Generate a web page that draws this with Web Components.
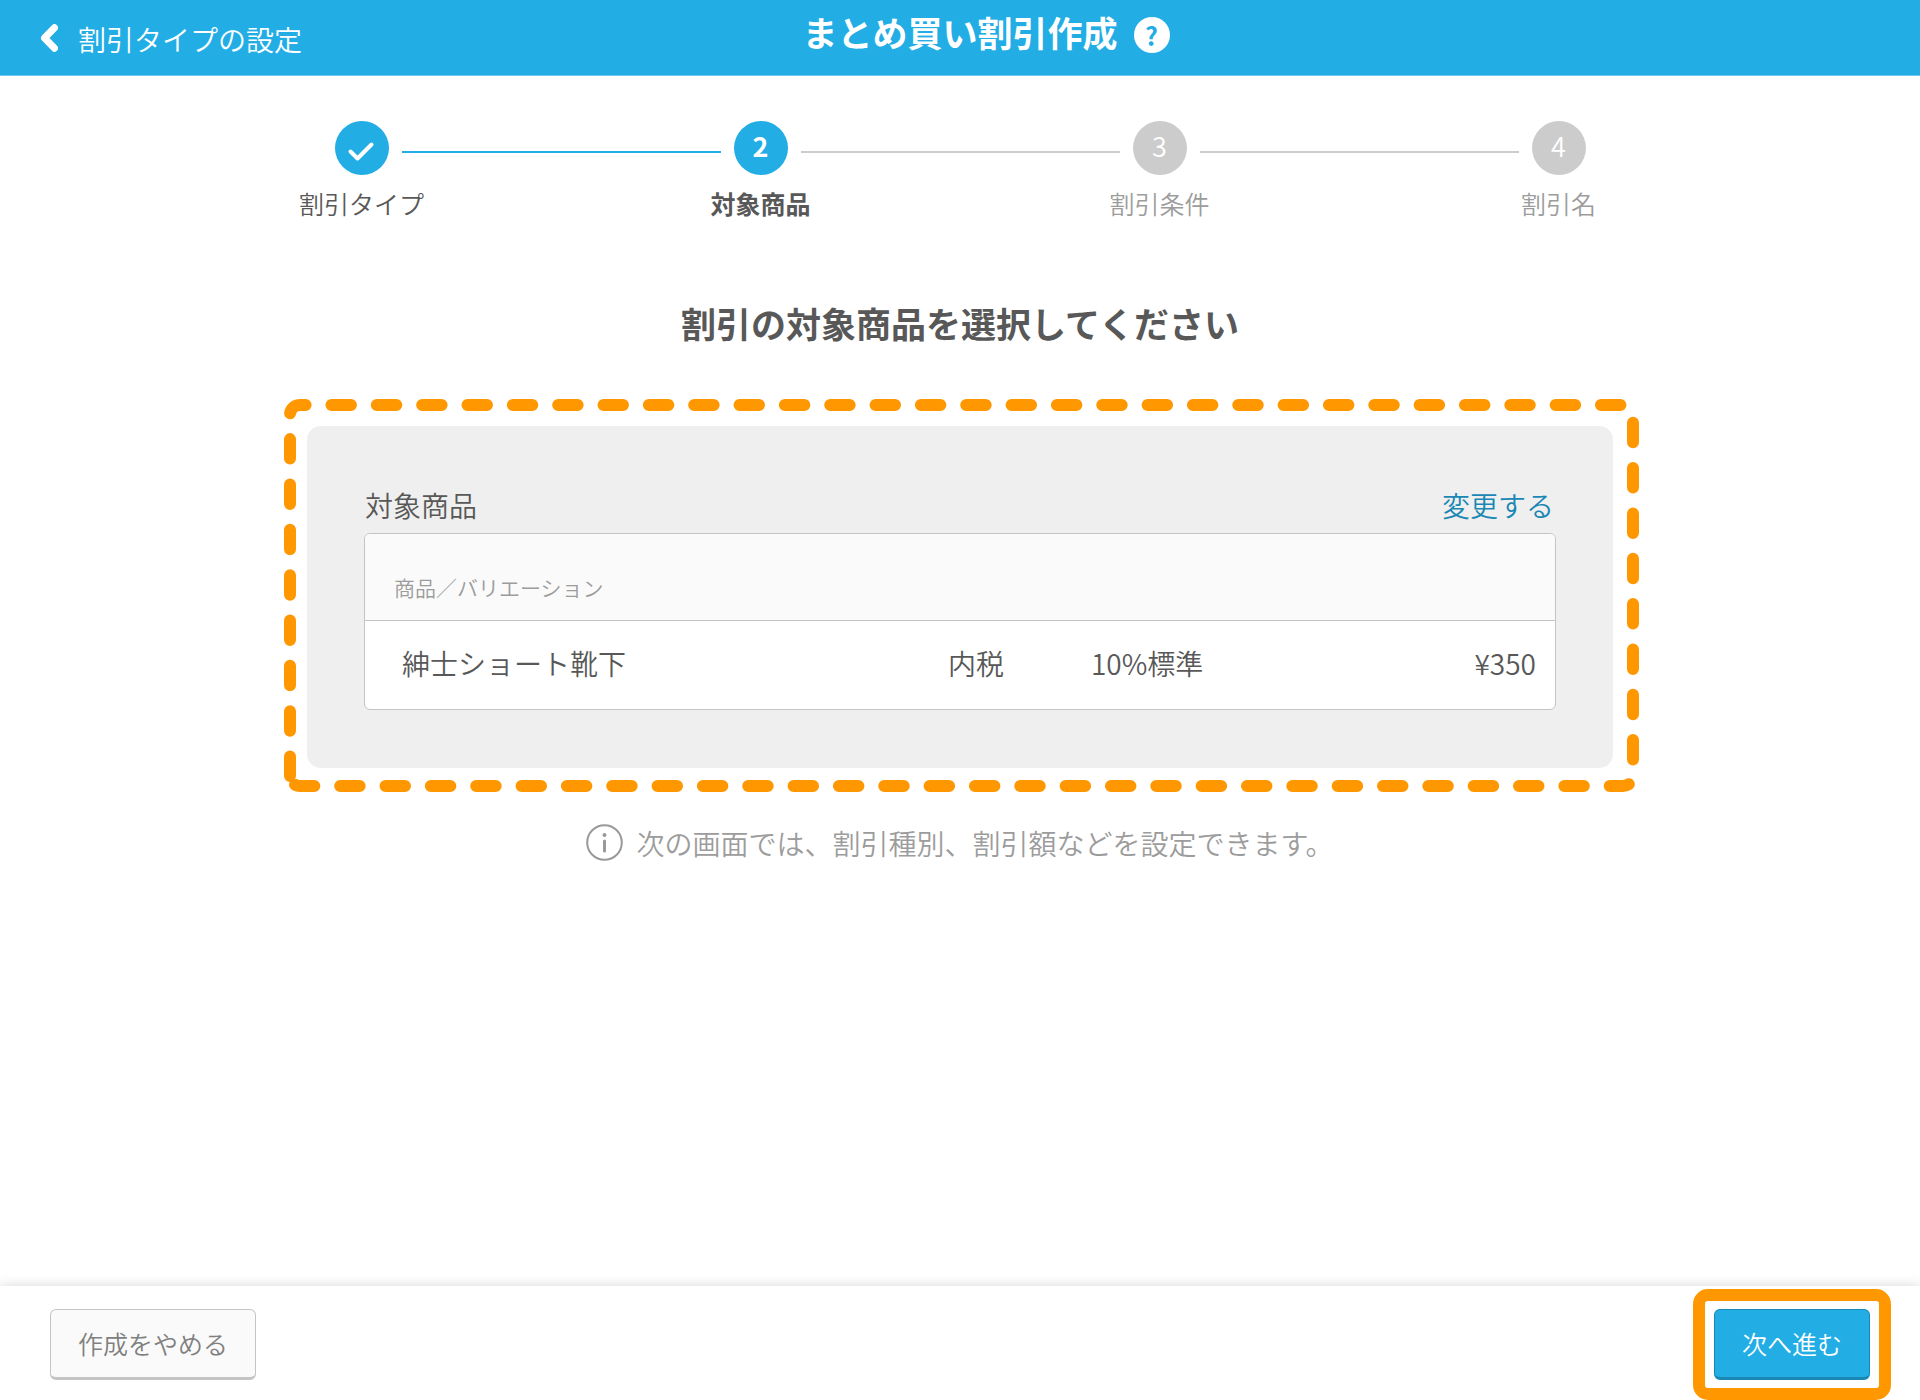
<!DOCTYPE html>
<html lang="ja">
<head>
<meta charset="utf-8">
<meta name="viewport" content="width=device-width, initial-scale=1">
<title>まとめ買い割引作成</title>
<style>
  :root {
    --blue: #22ade5;
    --blue-dark: #1a87b5;
    --text: #585858;
    --muted: #9c9c9c;
    --line: #c4c4c4;
    --orange: #ff9800;
  }
  html, body { margin: 0; }
  body {
    font-family: "Noto Sans CJK JP", "Noto Sans", sans-serif;
    font-size: 28px;
    line-height: 40px;
    font-weight: 350;
    color: var(--text);
    background: #fff;
  }
</style>
</head>
<body>
<discount-page>
  <app-header slot="header" back="割引タイプの設定">まとめ買い割引作成</app-header>
  <step-list>
    <step-item state="done" number="1">割引タイプ</step-item>
    <step-item state="current" number="2">対象商品</step-item>
    <step-item state="todo" number="3">割引条件</step-item>
    <step-item state="todo" number="4">割引名</step-item>
  </step-list>
  <page-heading>割引の対象商品を選択してください</page-heading>
  <product-card>
    <span slot="title">対象商品</span>
    <span slot="action">変更する</span>
  </product-card>
  <info-note>次の画面では、割引種別、割引額などを設定できます。</info-note>
  <action-bar slot="footer">
    <app-button slot="start">作成をやめる</app-button>
    <app-button slot="end" primary highlighted>次へ進む</app-button>
  </action-bar>
</discount-page>

<script>
const define = (name, html, setup) => {
  const template = document.createElement('template');
  template.innerHTML = html;
  customElements.define(name, class extends HTMLElement {
    connectedCallback() {
      if (this.shadowRoot) return;
      this.attachShadow({ mode: 'open' }).append(template.content.cloneNode(true));
      if (setup) setup(this, this.shadowRoot);
    }
  });
};

define('discount-page', `
  <style>
    :host { display: flex; flex-direction: column; min-height: 100vh; }
    main { flex: 1; display: flex; flex-direction: column; align-items: center; padding: 45px 60px 40px; }
  </style>
  <slot name="header"></slot>
  <main><slot></slot></main>
  <slot name="footer"></slot>
`);

define('app-header', `
  <style>
    :host { display: block; background: var(--blue); color: #fff; border-bottom: 1px solid #6bc8ee; }
    header { display: grid; grid-template-columns: 1fr auto 1fr; height: 75px; }
    a { display: flex; align-items: center; gap: 20px; justify-self: start; padding: 2px 0 0 40px; color: inherit; text-decoration: none; }
    a svg { width: 18px; height: 28px; margin-top: -2px; }
    h1 { margin: 0; padding-top: 12px; font-size: 35px; line-height: 40px; font-weight: 700; }
    button { align-self: start; width: 36px; height: 36px; margin: 17px 0 0 16px; padding: 0; border: 0; border-radius: 50%;
      background: #fff; color: var(--blue); font: 700 25px/36px "Noto Sans CJK JP", sans-serif; }
  </style>
  <header>
    <a href="#"><svg viewBox="0 0 18 28" fill="none" stroke="#fff" stroke-width="7" stroke-linecap="round" stroke-linejoin="round" aria-hidden="true"><path d="M14.5 3.7 4.5 14l10 10.3"/></svg><span></span></a>
    <h1><slot></slot></h1>
    <button type="button">?</button>
  </header>
`, (host, root) => { root.querySelector('span').textContent = host.getAttribute('back'); });

define('step-list', `
  <style>
    :host { display: block; width: 100%; max-width: 1596px; }
    nav { display: grid; grid-template-columns: repeat(4, 1fr); }
  </style>
  <nav><slot></slot></nav>
`);

define('step-item', `
  <style>
    :host { display: block; text-align: center; color: var(--text); --before: #ccc; --after: #ccc; --dot: #ccc; }
    :host([state="done"]) { --before: transparent; --after: var(--blue); --dot: var(--blue); }
    :host([state="current"]) { --before: var(--blue); --dot: var(--blue); font-weight: 700; }
    :host([state="todo"]) { color: var(--muted); }
    :host(:last-child) { --after: transparent; }
    .track { display: flex; gap: 13px; align-items: center; }
    .track::before, .track::after { content: ""; flex: 1; height: 2px; margin-top: 8px; background: var(--before); }
    .track::after { background: var(--after); }
    .dot { display: grid; place-items: center; width: 54px; height: 54px; border-radius: 50%; background: var(--dot); color: #fff; font-size: 27px; line-height: 50px; }
    .dot span { height: 54px; }
    .label { margin-top: 10px; font-size: 25px; line-height: 36px; }
  </style>
  <div class="track"><div class="dot"></div></div>
  <div class="label"><slot></slot></div>
`, (host, root) => {
  const dot = root.querySelector('.dot');
  if (host.getAttribute('state') === 'done') {
    dot.innerHTML = '<svg width="54" height="54" viewBox="0 0 54 54" fill="none" stroke="#fff" stroke-width="4" stroke-linecap="round" stroke-linejoin="round" aria-hidden="true"><path d="M15.5 30.5l7 7L36.5 23.5"/></svg>';
  } else {
    const s = document.createElement('span');
    s.textContent = host.getAttribute('number');
    dot.append(s);
  }
});

define('page-heading', `
  <style>
    :host { display: block; margin-top: 77px; }
    h2 { margin: 0; font-size: 35px; line-height: 50px; font-weight: 700; text-align: center; }
  </style>
  <h2><slot></slot></h2>
`);

/* Dashed callout outline; starts at the lower left corner and runs clockwise. */
define('dashed-outline', `
  <style>
    :host { display: block; pointer-events: none; }
    svg { display: block; width: 100%; height: 100%; }
    path { fill: none; stroke: var(--orange); stroke-width: 12; stroke-linecap: round; stroke-dasharray: 19.5 25.84; }
  </style>
  <svg aria-hidden="true"><path/></svg>
`, (host, root) => {
  const draw = () => {
    const w = host.clientWidth - 6, h = host.clientHeight - 6, r = 10;
    if (w < 20 || h < 20) return;
    root.querySelector('path').setAttribute('d',
      `M6 ${h - r}V${6 + r}A${r} ${r} 0 0 1 ${6 + r} 6H${w - r}A${r} ${r} 0 0 1 ${w} ${6 + r}V${h - r}A${r} ${r} 0 0 1 ${w - r} ${h}H${6 + r}A${r} ${r} 0 0 1 6 ${h - r}`);
  };
  draw();
  new ResizeObserver(draw).observe(host);
});

define('product-card', `
  <style>
    :host { display: block; position: relative; box-sizing: border-box; width: 100%; max-width: 1306px; margin-top: 78px; padding: 59px 57px 58px; border-radius: 14px; background: #efefef; }
    dashed-outline { position: absolute; inset: -27px -26px -24px -23px; }
    .head { display: flex; justify-content: space-between; margin-bottom: 8px; padding: 0 2px 0 1px; }
    h3 { margin: 0; font: inherit; }
    a { color: var(--blue-dark); text-decoration: none; }
    product-table { display: block; }
  </style>
  <dashed-outline></dashed-outline>
  <div class="head"><h3><slot name="title"></slot></h3><a href="#"><slot name="action"></slot></a></div>
  <product-table></product-table>
`);

define('product-table', `
  <style>
    :host { display: block; border: 1px solid var(--line); border-radius: 6px; background: #fff; overflow: hidden; }
    table { width: 100%; table-layout: fixed; border-collapse: collapse; }
    .name { width: 49%; } .tax { width: 12%; } .rate { width: 20%; }
    th { padding: 37px 29px 17px; font-size: 21px; line-height: 32px; font-weight: inherit; text-align: left; color: var(--muted); background: #fafafa; border-bottom: 1px solid var(--line); }
    td { padding: 22px 0 26px; }
    td:first-child { padding-left: 37px; }
    td:last-child { padding-right: 19px; text-align: right; }
  </style>
  <table>
    <colgroup><col class="name"><col class="tax"><col class="rate"><col></colgroup>
    <thead><tr><th colspan="4">商品／バリエーション</th></tr></thead>
    <tbody><tr><td>紳士ショート靴下</td><td>内税</td><td>10%標準</td><td>¥350</td></tr></tbody>
  </table>
`);

define('info-note', `
  <style>
    :host { display: block; margin-top: 55px; color: var(--muted); }
    p { display: flex; align-items: center; gap: 13px; margin: 0; }
    svg { flex: none; width: 37px; height: 37px; margin-bottom: 2px; }
  </style>
  <p><svg viewBox="0 0 37 37" fill="none" stroke="#999" stroke-width="2" stroke-linecap="round" aria-hidden="true"><circle cx="18.5" cy="18.5" r="17.3"/><path d="M18.5 17v10" stroke-width="3"/><circle cx="18.5" cy="11" r="2" fill="#999" stroke="none"/></svg><span><slot></slot></span></p>
`);

define('action-bar', `
  <style>
    :host { display: block; background: #fff; box-shadow: 0 0 12px rgba(0, 0, 0, .16); }
    footer { display: flex; justify-content: space-between; padding: 23px 50px 20px; }
  </style>
  <footer><slot name="start"></slot><slot name="end"></slot></footer>
`);

define('app-button', `
  <style>
    :host { display: block; position: relative; }
    button { display: block; height: 71px; padding: 0 27px 2px; border: 1px solid var(--line); border-bottom-width: 3px; border-radius: 6px; background: #fafafa; color: #808080; font: 350 25px/36px "Noto Sans CJK JP", sans-serif; }
    :host([primary]) button { border-color: var(--blue-dark); background: var(--blue); color: #fff; }
    :host([highlighted])::after { content: ""; position: absolute; inset: -20px -21px; border: 12px solid var(--orange); border-radius: 15px; pointer-events: none; }
  </style>
  <button type="button"><slot></slot></button>
`);
</script>
</body>
</html>
